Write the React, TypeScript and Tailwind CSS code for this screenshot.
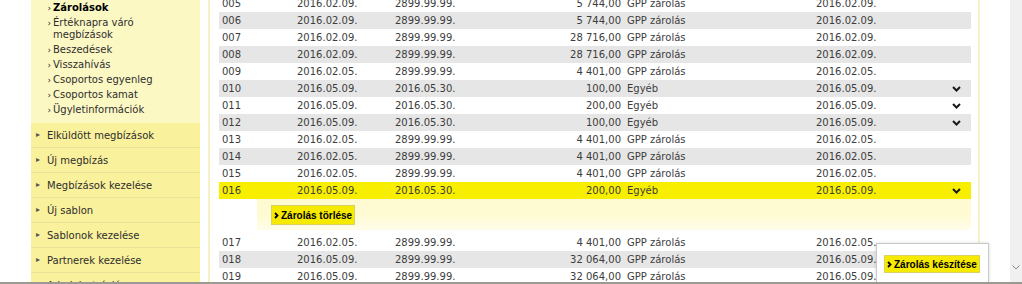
import React from "react";

type Row = {
  id: string;
  from: string;
  to: string;
  amount: string;
  type: string;
  date: string;
  more?: boolean;
  active?: boolean;
};

const rows: Row[] = [
  { id: "005", from: "2016.02.09.", to: "2899.99.99.", amount: "5 744,00", type: "GPP zárolás", date: "2016.02.09." },
  { id: "006", from: "2016.02.09.", to: "2899.99.99.", amount: "5 744,00", type: "GPP zárolás", date: "2016.02.09." },
  { id: "007", from: "2016.02.09.", to: "2899.99.99.", amount: "28 716,00", type: "GPP zárolás", date: "2016.02.09." },
  { id: "008", from: "2016.02.09.", to: "2899.99.99.", amount: "28 716,00", type: "GPP zárolás", date: "2016.02.09." },
  { id: "009", from: "2016.02.05.", to: "2899.99.99.", amount: "4 401,00", type: "GPP zárolás", date: "2016.02.05." },
  { id: "010", from: "2016.05.09.", to: "2016.05.30.", amount: "100,00", type: "Egyéb", date: "2016.05.09.", more: true },
  { id: "011", from: "2016.05.09.", to: "2016.05.30.", amount: "200,00", type: "Egyéb", date: "2016.05.09.", more: true },
  { id: "012", from: "2016.05.09.", to: "2016.05.30.", amount: "100,00", type: "Egyéb", date: "2016.05.09.", more: true },
  { id: "013", from: "2016.02.05.", to: "2899.99.99.", amount: "4 401,00", type: "GPP zárolás", date: "2016.02.05." },
  { id: "014", from: "2016.02.05.", to: "2899.99.99.", amount: "4 401,00", type: "GPP zárolás", date: "2016.02.05." },
  { id: "015", from: "2016.02.05.", to: "2899.99.99.", amount: "4 401,00", type: "GPP zárolás", date: "2016.02.05." },
  { id: "016", from: "2016.05.09.", to: "2016.05.30.", amount: "200,00", type: "Egyéb", date: "2016.05.09.", more: true, active: true },
  { id: "017", from: "2016.02.05.", to: "2899.99.99.", amount: "4 401,00", type: "GPP zárolás", date: "2016.02.05." },
  { id: "018", from: "2016.05.09.", to: "2899.99.99.", amount: "32 064,00", type: "GPP zárolás", date: "2016.05.09." },
  { id: "019", from: "2016.05.09.", to: "2899.99.99.", amount: "32 064,00", type: "GPP zárolás", date: "2016.05.09." },
];

const subMenu = [
  "Zárolások",
  "Értéknapra váró megbízások",
  "Beszedések",
  "Visszahívás",
  "Csoportos egyenleg",
  "Csoportos kamat",
  "Ügyletinformációk",
];

const mainMenu = [
  "Elküldött megbízások",
  "Új megbízás",
  "Megbízások kezelése",
  "Új sablon",
  "Sablonok kezelése",
  "Partnerek kezelése",
  "Adminisztráció",
];

function ChevronDown() {
  return (
    <svg width="9" height="6" viewBox="0 0 9 6" className="block">
      <polyline points="1,1 4.5,4.5 8,1" fill="none" stroke="#1a1a1a" strokeWidth="2" />
    </svg>
  );
}

function YellowButton({ label, className }: { label: string; className: string }) {
  return (
    <button
      className={`flex items-center gap-[2px] whitespace-nowrap bg-[#f6ea00] border border-[#d9d160] pl-[2px] pr-[2px] font-['Liberation_Sans',Arial,sans-serif] text-[10px] font-bold text-black ${className}`}
    >
      <svg width="5" height="7" viewBox="0 0 5 7" className="block shrink-0">
        <polyline points="1,1 3.5,3.5 1,6" fill="none" stroke="#000" strokeWidth="1.8" />
      </svg>
      {label}
    </button>
  );
}

function TableRow({ row }: { row: Row }) {
  const even = parseInt(row.id, 10) % 2 === 0;
  const bg = row.active ? "bg-[#f8ef00]" : even ? "bg-[#e6e6e6]" : "bg-white";
  return (
    <div className={`flex h-[17px] items-center pl-[3px] text-[10px] text-[#3d3d3d] ${bg}`}>
      <div className="w-[75px]">{row.id}</div>
      <div className="w-[98px]">{row.from}</div>
      <div className="w-[130px]">{row.to}</div>
      <div className="w-[96px] text-right">{row.amount}</div>
      <div className="w-[195px] pl-[6px]">{row.type}</div>
      <div className="w-[126px]">{row.date}</div>
      <div className="flex w-[29px] justify-center">{row.more && <ChevronDown />}</div>
    </div>
  );
}

export default function App() {
  return (
    <div className="flex h-[284px] w-[1022px] flex-col overflow-hidden bg-white font-['DejaVu_Sans',Verdana,sans-serif]">
      <div className="relative flex h-[282px] overflow-hidden">
        <div className="w-[31px] shrink-0" />

        {/* Sidebar */}
        <aside className="w-[169px] shrink-0 text-[10px] text-[#2e2e2e]">
          <div className="bg-[#fcf8c4] pt-[2px] pb-[7px] h-[123px]">
            {subMenu.map((item, i) => (
              <div key={item} className="flex pb-[3px] leading-[12px]">
                <span className="w-[22px] shrink-0 pr-[2px] text-right text-[9px]">›</span>
                <span className={`w-[115px] ${i === 0 ? "font-bold text-black" : ""}`}>{item}</span>
              </div>
            ))}
          </div>
          {mainMenu.map((item) => (
            <div
              key={item}
              className="flex h-[25px] items-center border-b border-[#ece39a] bg-[#faf19c]"
            >
              <span className="w-[16px] shrink-0 pl-[5px] text-[8px] text-[#555]">▸</span>
              <span>{item}</span>
            </div>
          ))}
        </aside>

        <div className="w-[8px] shrink-0" />

        {/* Content panel */}
        <main className="w-[772px] shrink-0 border-x-2 border-[#f5f1c8] pl-[9px] pr-[7px]">
          <div className="-mt-[5px]">
            {rows.slice(0, 12).map((r) => (
              <TableRow key={r.id} row={r} />
            ))}
            <div className="mb-[4px] flex">
              <div className="w-[38px]" />
              <div className="h-[31px] flex-1 bg-gradient-to-b from-[#fefbd2] via-[#fefbd2] to-[#fffdea] pl-[14px] pt-[6px]">
                <YellowButton label="Zárolás törlése" className="h-[20px]" />
              </div>
            </div>
            {rows.slice(12).map((r) => (
              <TableRow key={r.id} row={r} />
            ))}
          </div>
        </main>

        <div className="flex-1" />

        {/* Scrollbar */}
        <div className="flex w-[12px] shrink-0 flex-col justify-end bg-[#f0f0f0] pb-[12px]">
          <svg width="8" height="5" viewBox="0 0 8 5" className="ml-[2px] block">
            <polyline points="0.5,0.5 4,4 7.5,0.5" fill="none" stroke="#8a8a8a" strokeWidth="1" />
          </svg>
        </div>

        {/* Popup */}
        <div className="absolute left-[876px] top-[243px] h-[50px] w-[113px] border border-[#c9c9c9] bg-white pl-[7px] pt-[11px] shadow-[0_0_3px_rgba(0,0,0,0.15)]">
          <YellowButton label="Zárolás készítése" className="h-[18px]" />
        </div>
      </div>
      <div className="h-[2px] bg-[#9b9a92]" />
    </div>
  );
}
